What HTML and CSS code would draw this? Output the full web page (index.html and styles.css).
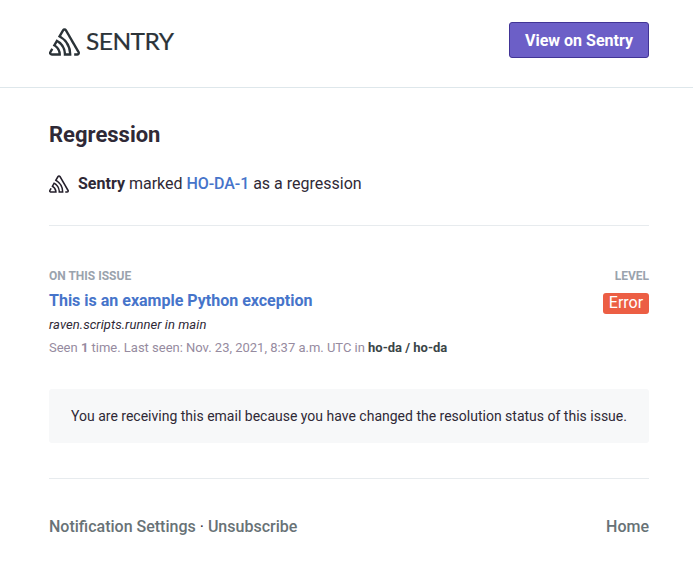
FILE: index.html
```html
<!DOCTYPE html>
<html lang="en">
<head>
<meta charset="utf-8">
<title>Regression</title>
<link rel="stylesheet" href="styles.css">
</head>
<body>
<svg class="defs" aria-hidden="true">
  <symbol id="mark" viewBox="0 0 50 44"><path d="M29,2.26a4.67,4.67,0,0,0-8,0L14.42,13.53A32.21,32.21,0,0,1,32.17,40.19H27.55A27.68,27.68,0,0,0,12.09,17.47L6,28a15.92,15.92,0,0,1,9.23,12.17H4.62A.76.76,0,0,1,4,39.06l2.94-5a10.74,10.74,0,0,0-3.36-1.9l-2.91,5a4.54,4.54,0,0,0,1.69,6.24A4.66,4.66,0,0,0,4.62,44H19.15a19.4,19.4,0,0,0-8-17.31l2.31-4A23.87,23.87,0,0,1,23.76,44H36.07a35.88,35.88,0,0,0-16.41-31.8l4.67-8a.77.77,0,0,1,1.05-.27c.53.29,20.29,34.77,20.66,35.17a.76.76,0,0,1-.68,1.13H40.6q.09,1.91,0,3.81h4.78A4.59,4.59,0,0,0,50,39.43a4.49,4.49,0,0,0-.62-2.28Z"/></symbol>
</svg>
<header class="header">
  <div class="logo"><svg class="logo-mark"><use href="#mark"/></svg><span class="wordmark">SENTRY</span></div>
  <a class="button">View on Sentry</a>
</header>
<main class="content">
  <h1 class="title">Regression</h1>
  <p class="activity"><svg class="avatar"><use href="#mark"/></svg><span><strong>Sentry</strong> marked <a class="link">HO-DA-1</a> as a regression</span></p>
  <section class="issue">
    <div>
      <h2 class="label">ON THIS ISSUE</h2>
      <a class="issue-title">This is an example Python exception</a>
      <p class="culprit">raven.scripts.runner in main</p>
      <p class="meta">Seen <b>1</b> time. Last seen: Nov. 23, 2021, 8:37 a.m. UTC in <b class="project">ho-da / ho-da</b></p>
    </div>
    <div class="level">
      <h2 class="label">LEVEL</h2>
      <span class="badge">Error</span>
    </div>
  </section>
  <p class="notice">You are receiving this email because you have changed the resolution status of this issue.</p>
  <footer class="footer">
    <span><a>Notification Settings</a> <span class="dot">·</span> <a>Unsubscribe</a></span>
    <a>Home</a>
  </footer>
</main>
</body>
</html>
```
FILE: styles.css
```css
* { box-sizing: border-box; }
body { margin: 0; background: #fff; color: #2f2936; font: 16px/24px Roboto, sans-serif; }
h1, h2, p { margin: 0; }
.defs { display: none; }
.header { display: flex; justify-content: space-between; height: 88px; padding: 22px 44px 0 49px; border-bottom: 1px solid #dee7eb; }
.logo { display: flex; align-items: flex-start; color: #2b3338; }
.logo-mark { width: 31px; height: 28px; margin-top: 6px; fill: currentColor; }
.wordmark { margin: 6px 0 0 6px; font: 400 22.5px/28px Lato, sans-serif; letter-spacing: -0.5px; transform: scaleX(1.09); transform-origin: left; -webkit-text-stroke: 0.2px currentColor; }
.button { width: 140px; height: 36px; border: 1px solid #413496; border-radius: 3px; background: #6c5fc7; color: #fff; font-weight: 700; line-height: 35px; text-align: center; }
.content { padding: 34px 44px 0 49px; }
.title { font-size: 22px; line-height: 26px; font-weight: 700; }
.activity { display: flex; height: 78px; padding-top: 24px; border-bottom: 1px solid #e7ebee; }
.avatar { width: 20px; height: 18px; margin: 3px 9px 0 0; fill: #241f2b; }
.link { color: #4674ca; font-weight: 500; letter-spacing: -0.08px; }
.issue { display: flex; justify-content: space-between; padding-top: 41px; }
.label { font-size: 12px; line-height: 18px; font-weight: 700; color: #9aa3ad; }
.issue-title { display: block; margin-top: 4px; color: #4674ca; font-weight: 700; }
.culprit { margin-top: 2px; font-size: 13px; line-height: 20px; font-style: italic; letter-spacing: 0.06px; }
.meta { margin-top: 3px; font-size: 13px; line-height: 20px; color: #968ba0; letter-spacing: -0.01px; }
.project { color: #3a4547; }
.level { display: flex; flex-direction: column; align-items: flex-end; }
.badge { width: 46px; height: 21px; margin-top: 8px; border-radius: 3px; background: #ec5e44; color: #fff; line-height: 20px; text-align: center; }
.notice { height: 54px; margin: 31px 0 35px; border-radius: 3px; background: #f7f8f9; font-size: 14px; line-height: 54px; text-align: center; }
.footer { display: flex; justify-content: space-between; padding-top: 36px; border-top: 1px solid #e7ebee; color: #687276; font-weight: 500; }
.dot { font-weight: 400; color: #2f2936; }
```
